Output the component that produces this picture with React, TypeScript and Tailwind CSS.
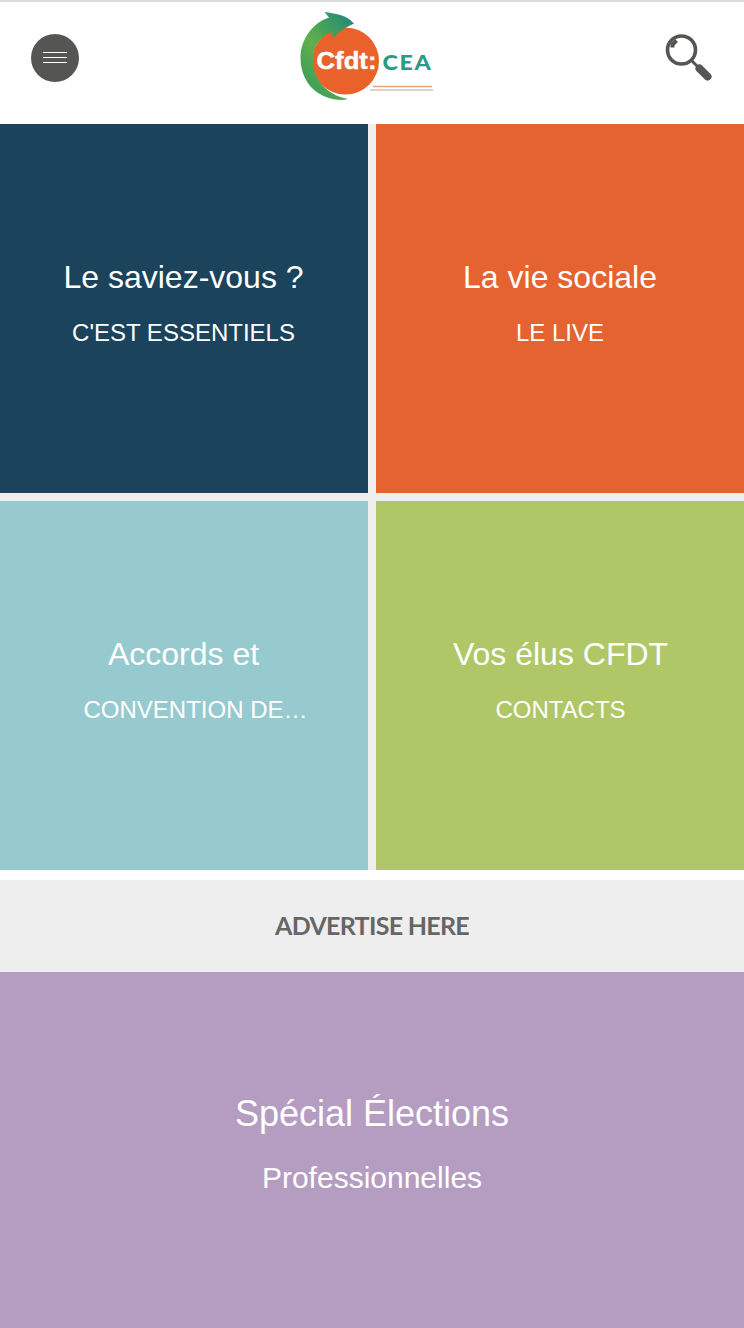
const tiles = [
  {
    id: 'saviez-vous',
    title: 'Le saviez-vous ?',
    subtitle: "C'EST ESSENTIELS",
    color: 'bg-[#1b435b]',
    titleClass: 'pr-px',
    subtitleClass: 'pr-px',
  },
  {
    id: 'vie-sociale',
    title: 'La vie sociale',
    subtitle: 'LE LIVE',
    color: 'bg-[#e46331]',
    titleClass: '',
    subtitleClass: '',
  },
  {
    id: 'accords',
    title: 'Accords et',
    subtitle: 'CONVENTION DE…',
    color: 'bg-[#97cacf]',
    titleClass: 'pr-px',
    subtitleClass: 'pl-[23px]',
  },
  {
    id: 'elus',
    title: 'Vos élus CFDT',
    subtitle: 'CONTACTS',
    color: 'bg-[#afc766]',
    titleClass: 'pl-px',
    subtitleClass: 'pl-px',
  },
];

function Logo() {
  return (
    <svg width="155" height="108" viewBox="0 0 155 108" role="img" aria-label="Cfdt: CEA">
      <defs>
        <linearGradient id="arrow" x1="0" y1="1" x2="0.8" y2="0">
          <stop offset="0" stopColor="#2d9560" />
          <stop offset="0.5" stopColor="#62ae4c" />
          <stop offset="0.72" stopColor="#43a259" />
          <stop offset="1" stopColor="#2a8b76" />
        </linearGradient>
      </defs>
      <circle cx="55.5" cy="61" r="33.5" fill="#ea622b" />
      <path
        d="M34.500 12C45 13.500 56 14.500 64 23.500C56 27 48 32 43 38.500L41.500 32C30 36 22 47 23 62C24 80 37 95 58 99C49 101.500 38 99 29 93.500C17 86 10.500 73 10.500 58C10.500 40 22 23 39 17.500Z"
        fill="url(#arrow)"
      />
      <text
        x="26.500"
        y="69"
        textLength="60"
        lengthAdjust="spacingAndGlyphs"
        fill="#fff"
        stroke="#fff"
        strokeWidth="0.4"
        className="font-['Liberation_Sans',sans-serif] text-[23px] font-bold"
      >
        Cfdt:
      </text>
      <text
        x="92.500"
        y="70"
        textLength="50"
        lengthAdjust="spacingAndGlyphs"
        fill="#2b9a85"
        className="font-[Lato,sans-serif] text-[20.5px] font-black tracking-[1.5px]"
      >
        CEA
      </text>
      <path d="M83 86.500H142" stroke="#efa078" strokeWidth="1.500" />
      <path d="M80 90H143" stroke="#c9c4c1" strokeWidth="1.300" />
    </svg>
  );
}

function SearchIcon() {
  return (
    <svg width="48" height="50" viewBox="0 0 48 50" fill="none" stroke="#555554">
      <circle cx="17.500" cy="17" r="14" strokeWidth="3.600" />
      <path d="M8.500 14.500V11.500L12.500 7.500" strokeWidth="4" />
      <path d="M27 27L34 34" strokeWidth="3" />
      <path d="M35.500 35.500L43.500 43.500" strokeWidth="8" strokeLinecap="round" />
    </svg>
  );
}

function Header() {
  return (
    <header className="flex h-[124px] items-start justify-between border-t-2 border-[#dcdcdc] bg-white pr-8 pl-[31px]">
      <button
        aria-label="Menu"
        className="mt-8 flex size-12 flex-col items-center justify-center gap-1 rounded-full bg-[#555554] pb-0.5"
      >
        <span className="h-px w-6 bg-white" />
        <span className="h-px w-6 bg-white" />
        <span className="h-px w-6 bg-white" />
      </button>
      <div className="-mt-0.5 mr-2">
        <Logo />
      </div>
      <button aria-label="Rechercher" className="mt-[31px]">
        <SearchIcon />
      </button>
    </header>
  );
}

export default function App() {
  return (
    <div className="h-[1328px] w-[744px] overflow-hidden bg-white font-['Liberation_Sans',Arial,sans-serif]">
      <Header />
      <main>
        <div className="grid grid-cols-2 gap-2 bg-[#efefef]">
          {tiles.map((tile) => (
            <section key={tile.id} className={`h-[369px] pt-[133px] text-center text-white ${tile.color}`}>
              <h2 className={`text-[32px] leading-10 ${tile.titleClass}`}>{tile.title}</h2>
              <p className={`mt-5 text-2xl leading-8 ${tile.subtitleClass}`}>{tile.subtitle}</p>
            </section>
          ))}
        </div>
        <div className="mt-2.5 flex h-[92px] items-center justify-center bg-[#eeeeee] font-[Lato,sans-serif] text-[25px] font-bold tracking-[-0.7px] text-[#666]">
          ADVERTISE HERE
        </div>
        <section className="h-[356px] bg-[#b59cc1] pt-[120px] text-center text-white">
          <h2 className="text-4xl leading-[44px]">Spécial Élections</h2>
          <p className="mt-6 text-3xl leading-9">Professionnelles</p>
        </section>
      </main>
    </div>
  );
}
